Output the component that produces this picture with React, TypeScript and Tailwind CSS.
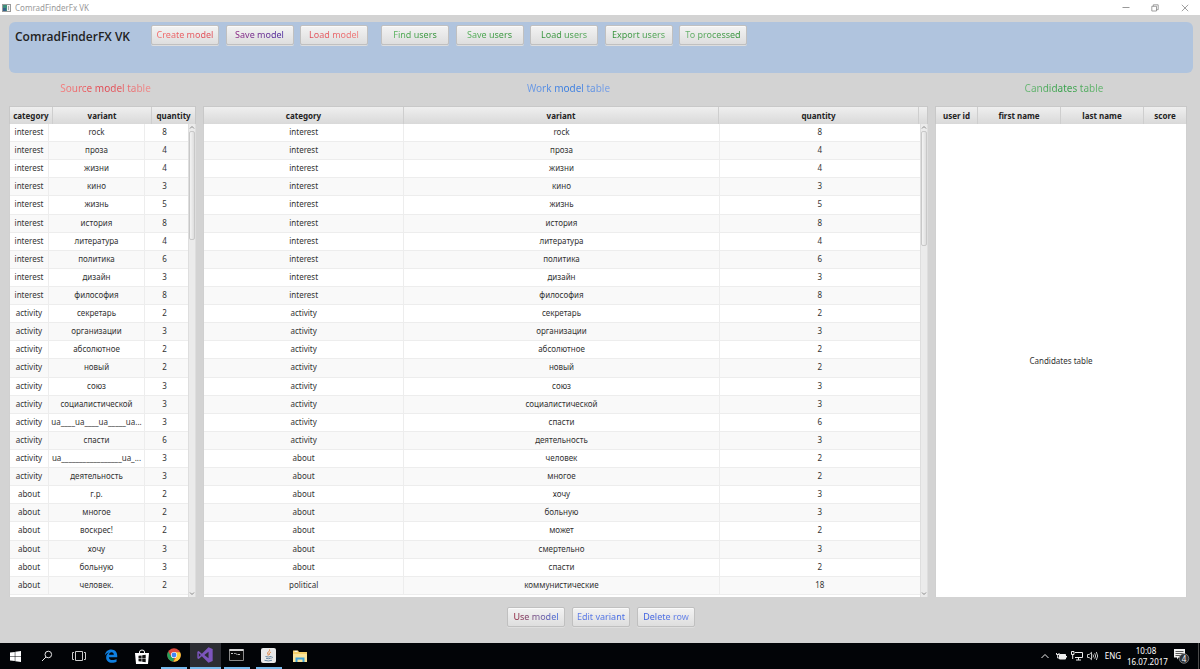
import { ReactNode } from "react";
import clsx from "clsx";

type Row = [string, string, number];

const sourceRows: Row[] = [
  ["interest", "rock", 8],
  ["interest", "проза", 4],
  ["interest", "жизни", 4],
  ["interest", "кино", 3],
  ["interest", "жизнь", 5],
  ["interest", "история", 8],
  ["interest", "литература", 4],
  ["interest", "политика", 6],
  ["interest", "дизайн", 3],
  ["interest", "философия", 8],
  ["activity", "секретарь", 2],
  ["activity", "организации", 3],
  ["activity", "абсолютное", 2],
  ["activity", "новый", 2],
  ["activity", "союз", 3],
  ["activity", "социалистической", 3],
  ["activity", "ua____ua____ua_____ua...", 3],
  ["activity", "спасти", 6],
  ["activity", "ua_________________ua_...", 3],
  ["activity", "деятельность", 3],
  ["about", "г.р.", 2],
  ["about", "многое", 2],
  ["about", "воскрес!", 2],
  ["about", "хочу", 3],
  ["about", "больную", 3],
  ["about", "человек.", 2],
];

const workRows: Row[] = [
  ...sourceRows.slice(0, 16),
  ["activity", "спасти", 6],
  ["activity", "деятельность", 3],
  ["about", "человек", 2],
  ["about", "многое", 2],
  ["about", "хочу", 3],
  ["about", "больную", 3],
  ["about", "может", 2],
  ["about", "смертельно", 3],
  ["about", "спасти", 2],
  ["political", "коммунистические", 18],
];

const modelButtons = [
  { label: "Create model", color: "from-[#f26a6a] to-[#e04a55]" },
  { label: "Save model", color: "from-[#8b2080] to-[#4a2a9e]" },
  { label: "Load model", color: "from-[#e04a55] to-[#f07a7a]" },
];

const userButtons = [
  { label: "Find users", color: "from-[#55b05a] to-[#2f9035]" },
  { label: "Save users", color: "from-[#55b05a] to-[#2f9035]" },
  { label: "Load users", color: "from-[#2f9035] to-[#55a85a]" },
  { label: "Export users", color: "from-[#2f9035] to-[#55a85a]" },
  { label: "To processed", color: "from-[#65b06a] to-[#2f9035]" },
];

const rowButtons = [
  { label: "Use model", color: "from-[#8e1030] to-[#3a68e0]" },
  { label: "Edit variant", color: "from-[#5a78e6] to-[#4068e6]" },
  { label: "Delete row", color: "from-[#3458e0] to-[#6a86ea]" },
];

function FxButton({
  label,
  color,
  width,
}: {
  label: string;
  color: string;
  width: string;
}) {
  return (
    <button
      className={clsx(
        "h-5 rounded-xs border border-[#c0c0c0] bg-linear-to-b from-[#f3f3f3] to-[#dedede] text-[9px] leading-[18px] whitespace-nowrap shadow-[inset_0_1px_0_#fafafa,0_1px_0_#dedede]",
        width
      )}
    >
      <span className={clsx("bg-linear-to-r bg-clip-text text-transparent", color)}>
        {label}
      </span>
    </button>
  );
}

function HeaderRow({ names, cols }: { names: string[]; cols: string }) {
  return (
    <thead className="block shrink-0">
      <tr
        className={clsx(
          "grid h-[18px] border border-b-0 border-[#c8c8c8] bg-linear-to-b from-[#efefef] to-[#d9d9d9]",
          cols
        )}
      >
        {names.map((name, i) => (
          <th
            key={i}
            className="overflow-hidden border-r border-[#cecece] text-center text-[8px] leading-[18px] font-bold whitespace-nowrap text-[#222] last:border-r-0"
          >
            {name}
          </th>
        ))}
      </tr>
    </thead>
  );
}

function ScrollBar({ thumb }: { thumb: string }) {
  return (
    <div className="absolute top-[18px] right-0 bottom-0 flex w-2 flex-col items-center border-x border-[#dedede] bg-[#ebebeb]">
      <svg className="h-[7px] w-1.5 shrink-0" viewBox="0 0 6 7" fill="none" stroke="#888">
        <path d="M1 4.5 3 2.5 5 4.5" />
      </svg>
      <div
        className={clsx(
          "w-1.5 shrink-0 rounded-xs border border-[#c8c8c8] bg-linear-to-r from-[#f4f4f4] to-[#dedede]",
          thumb
        )}
      />
      <svg className="mt-auto h-[7px] w-1.5 shrink-0" viewBox="0 0 6 7" fill="none" stroke="#888">
        <path d="M1 2.5 3 4.5 5 2.5" />
      </svg>
    </div>
  );
}

function ModelTable({
  title,
  names,
  rows,
  headCols,
  bodyCols,
  thumb,
}: {
  title: string;
  names: string[];
  rows: Row[];
  headCols: string;
  bodyCols: string;
  thumb: string;
}) {
  return (
    <div className="relative flex flex-1 flex-col bg-white">
      <table aria-label={title} className="flex flex-1 flex-col">
        <HeaderRow names={names} cols={headCols} />
        <tbody className="flex flex-1 flex-col border-l border-[#d0d0d0] pr-2 pb-[2px]">
          {rows.map((row, i) => (
            <tr
              key={i}
              className={clsx(
                "grid min-h-[18px] flex-1 items-stretch border-b border-[#ededed] even:bg-[#f9f9f9]",
                bodyCols
              )}
            >
              {row.map((cell, j) => (
                <td
                  key={j}
                  className="overflow-hidden border-r border-[#ededed] text-center text-[8px] leading-4 whitespace-nowrap text-[#333] last:border-r-0"
                >
                  {cell}
                </td>
              ))}
            </tr>
          ))}
        </tbody>
      </table>
      <ScrollBar thumb={thumb} />
    </div>
  );
}

function Panel({
  title,
  color,
  width,
  children,
}: {
  title: string;
  color: string;
  width: string;
  children: ReactNode;
}) {
  return (
    <section className={clsx("flex flex-col", width)}>
      <h2 className="h-[33px] pl-1.5 text-center text-[10px] leading-[30px]">
        <span className={clsx("bg-linear-to-r bg-clip-text text-transparent", color)}>
          {title}
        </span>
      </h2>
      {children}
    </section>
  );
}

function TitleBar() {
  return (
    <div className="flex h-[15px] shrink-0 items-center bg-white pl-0.5">
      <svg className="h-2 w-[9px]" viewBox="0 0 9 8">
        <rect x="0.5" y="0.5" width="8" height="7" fill="#f2f2f2" stroke="#9a9a9a" />
        <rect x="1" y="1" width="4" height="6" fill="#3d8f7c" />
        <rect x="1" y="4" width="3" height="3" fill="#35618c" />
        <rect x="6" y="2" width="1" height="4" fill="#aaa" />
      </svg>
      <span className="pl-1 text-[8px] leading-[14px] text-[#999]">ComradFinderFx VK</span>
      <div className="ml-auto flex">
        <button aria-label="Minimize" className="flex w-[29px] justify-center">
          <svg className="size-2" viewBox="0 0 8 8" stroke="#999">
            <path d="M0.5 3.5h7" />
          </svg>
        </button>
        <button aria-label="Restore" className="flex w-[29px] justify-center">
          <svg className="size-2" viewBox="0 0 8 8" fill="none" stroke="#888">
            <path d="M.8 2.300h4.700v4.700H.8zM2.300 2.300V.8h4.900v4.900H5.500" strokeWidth="0.8" />
          </svg>
        </button>
        <button aria-label="Close" className="flex w-[31px] justify-center">
          <svg className="size-2" viewBox="0 0 8 8" stroke="#888">
            <path d="M.8.8l6.400 6.400M7.200.8.8 7.200" strokeWidth="0.8" />
          </svg>
        </button>
      </div>
    </div>
  );
}

const apps: { name: string; open?: boolean; active?: boolean; icon: ReactNode }[] = [
  {
    name: "Start",
    icon: (
      <svg className="size-[11px]" viewBox="0 0 11 11" fill="#fff">
        <path d="M0 1.6 4.8.9v4.3H0zM5.3.8 11 0v5.2H5.3zM0 5.8h4.8v4.3L0 9.4zM5.3 5.8H11V11l-5.7-.8z" />
      </svg>
    ),
  },
  {
    name: "Search",
    icon: (
      <svg className="size-3" viewBox="0 0 12 12" fill="none" stroke="#e8e8e8">
        <circle cx="7.3" cy="4.5" r="3.3" />
        <path d="M5 7 1 11" />
      </svg>
    ),
  },
  {
    name: "Task view",
    icon: (
      <svg className="h-3 w-3.5" viewBox="0 0 14 12" fill="none" stroke="#ccc">
        <path d="M3.5 1.5h7v9h-7zM2 2.5H.5v7H2M12 2.5h1.5v7H12" />
      </svg>
    ),
  },
  {
    name: "Edge",
    icon: (
      <svg className="size-[14px]" viewBox="0 0 24 24" fill="#0f7fe0">
        <path d="M1.5 11C2.3 5 6.600 1 12.400 1 19 1 22.700 5.900 22.700 11.400V14H8.300c.2 3.400 3 5 6.500 5 2.700 0 4.900-.8 6.700-1.900v4.700C19.600 22.900 17 23.500 14 23.500 7.700 23.500 3.700 19.800 3.700 14.400c0-3.500 1.900-6.600 5.300-8.200C5.700 6.600 3.200 8.400 1.500 11zM8.500 9.800h8.400c0-2.700-1.500-4.200-4-4.200-2.300 0-4 1.700-4.400 4.200z" />
      </svg>
    ),
  },
  {
    name: "Store",
    icon: (
      <svg className="h-[15px] w-[14px]" viewBox="0 0 14 15">
        <path d="M4.500 4.500V3q0-2 2.500-2t2.500 2v1.500" fill="none" stroke="#fff" />
        <path d="M0 4h14l-1 11H1z" fill="#fff" />
        <path d="M3.500 6.800 6.600 6.400v2.800H3.500zM7.200 6.300l3.500-.5v3.400H7.200zM3.500 9.800h3.100v2.800l-3.100-.4zM7.200 9.800h3.500v3.400l-3.500-.5z" fill="#111" />
      </svg>
    ),
  },
  {
    name: "Chrome",
    open: true,
    icon: (
      <svg className="size-[14px]" viewBox="0 0 24 24">
        <circle cx="12" cy="12" r="11.500" fill="#dd4b3e" />
        <path d="M2 6.200 7.500 15 12 17l-1 6.500A11.500 11.500 0 0 1 2 6.200z" fill="#25a05a" />
        <path d="M22.500 7.200H12L16.700 14.500 11 23.500A11.500 11.500 0 0 0 22.500 7.200z" fill="#fbcd3a" />
        <circle cx="12" cy="12" r="5.300" fill="#fff" />
        <circle cx="12" cy="12" r="4.200" fill="#4285f4" />
      </svg>
    ),
  },
  {
    name: "Visual Studio",
    open: true,
    active: true,
    icon: (
      <svg className="size-4" viewBox="0 0 24 24">
        <path
          d="M17.200.5 23.500 3v18l-6.300 2.500L7.300 14 2.500 18 .5 17V7l2-1 4.800 4zM17.300 7 11 12l6.300 5zM2.700 9v6l3-3z"
          fill="#7d55bd"
          fillRule="evenodd"
        />
      </svg>
    ),
  },
  {
    name: "Command prompt",
    open: true,
    icon: (
      <svg className="h-3 w-[15px]" viewBox="0 0 15 12">
        <path d="M.5.500h14v11H.5z" fill="#0a0a0a" stroke="#8a8a8a" />
        <path d="M.5 1h14" stroke="#d5d5d5" strokeWidth="2" />
        <path d="M2 4.500h2M5 4.500h.8M6.500 4l1 1.500M8.500 5.500h2.500" stroke="#ddd" strokeWidth="0.9" />
      </svg>
    ),
  },
  {
    name: "Java",
    open: true,
    icon: (
      <svg className="size-[15px]" viewBox="0 0 15 15" fill="none">
        <rect width="15" height="15" rx="2" fill="#e9e9e9" />
        <path d="M8.500 1.500c.8 2-3 2.800-1.500 4.700.5.700.3 1 0 1.500M9.800 4.200C8 5 8 5.800 8.500 7" stroke="#e0803c" />
        <path d="M4.500 8.500q3 1 5.500 0M5 10.300q2.500.8 4.500 0M3.500 12.300q4 1.300 7.500 0M10.500 8.500q2 .3-.3 2" stroke="#5c7f9c" strokeWidth="0.9" />
      </svg>
    ),
  },
  {
    name: "Explorer",
    icon: (
      <svg className="h-3 w-[14px]" viewBox="0 0 14 12">
        <path d="M0 .5h5l1 1.500h8v10H0z" fill="#f5d06a" />
        <path d="M1.500 1.300h3" stroke="#fff" />
        <path d="M0 4h14v8H0z" fill="#fbe59b" />
        <path d="M2.500 12V7.500h9V12h-2V9.500h-5V12z" fill="#42a5dc" />
      </svg>
    ),
  },
];

function TaskBar() {
  return (
    <footer className="flex h-[26px] shrink-0 bg-[#020407] text-white">
      <nav className="grid w-[316px] grid-cols-10">
        {apps.map((app) => (
          <button
            key={app.name}
            aria-label={app.name}
            className={clsx("flex flex-col items-center", app.active && "bg-[#2c2d33]")}
          >
            <span className="flex flex-1 items-center">{app.icon}</span>
            {app.open && (
              <span
                className={clsx("h-0.5 bg-[#76b9ed]", app.active ? "w-full" : "w-[26px]")}
              />
            )}
          </button>
        ))}
      </nav>
      <div className="ml-auto flex items-center">
        <svg className="h-[9px] w-2" viewBox="0 0 8 9" fill="none" stroke="#eee">
          <path d="M.5 6 4 2.500 7.500 6" />
        </svg>
        <svg className="ml-[7px] h-[9px] w-[11px]" viewBox="0 0 11 9" fill="none" stroke="#eee">
          <path d="M3.500 2.500h6v4.500h-6z" fill="#eee" />
          <path d="M10.500 4v1.500M.5 1v1.500h2.500V1M1.700 2.500V6h2" />
        </svg>
        <svg className="ml-1 h-[10px] w-3" viewBox="0 0 12 10" fill="none" stroke="#eee">
          <path d="M4 1.500h7.500v5H4M7.500 6.500v2.500M5 9h5M.5.500h2.500v3H.5zM1.700 3.500V8" />
        </svg>
        <svg className="ml-1 h-[10px] w-3" viewBox="0 0 12 10" fill="none" stroke="#ddd" strokeWidth="0.9">
          <path d="M.5 3.500h1.700L4.500 1.300v7.400L2.200 6.500H.5zM6 3.500q1 1.500 0 3M7.700 2.300q1.900 2.700 0 5.400M9.300 1q2.800 4 0 8" />
        </svg>
        <span className="w-[28px] text-center text-[8px]">ENG</span>
        <time className="w-[38px] text-center text-[8px] leading-[11px] whitespace-nowrap">
          10:08
          <br />
          16.07.2017
        </time>
        <button aria-label="Notifications" className="ml-2 flex">
          <svg className="h-4 w-[17px]" viewBox="0 0 17 16">
            <path d="M1 1h11v8.500H5.500L4 11.500V9.500H1z" fill="#f2f2f2" />
            <path d="M2.500 3.500h8M2.500 5.500h8M2.500 7.500h5" stroke="#333" strokeWidth="0.8" />
            <circle cx="11" cy="10.500" r="4.800" fill="#2f3237" stroke="#999" strokeWidth="0.7" />
            <text x="11" y="13.500" textAnchor="middle" fontSize="8" fill="#fff">
              4
            </text>
          </svg>
        </button>
        <span className="mr-px ml-2 h-full w-px bg-[#4a4a4a]" />
      </div>
    </footer>
  );
}

export default function App() {
  return (
    <div className="flex min-h-screen flex-col bg-[#d3d3d3] font-['Noto_Sans','Open_Sans',sans-serif]">
      <TitleBar />
      <main className="flex flex-1 flex-col pt-[7px] pr-[7px] pl-[9px]">
        <header className="flex h-[51px] items-start rounded-md bg-[#b0c4de] pt-[3px] pl-1.5">
          <h1 className="w-[136px] font-['Open_Sans',sans-serif] text-[12px] leading-6 font-semibold whitespace-nowrap text-[#222]">
            ComradFinderFX VK
          </h1>
          <div className="flex w-[217px] justify-between">
            {modelButtons.map((b) => (
              <FxButton key={b.label} {...b} width="w-[68px]" />
            ))}
          </div>
          <div className="ml-[13px] flex w-[366px] justify-between">
            {userButtons.map((b) => (
              <FxButton key={b.label} {...b} width="w-[68px]" />
            ))}
          </div>
        </header>

        <div className="flex flex-1 gap-[7px] pr-1.5">
          <Panel
            title="Source model table"
            color="from-[#f47f7f] via-[#e0404c] to-[#f09090]"
            width="w-[187px]"
          >
            <ModelTable
              title="Source model"
              names={["category", "variant", "quantity"]}
              rows={sourceRows}
              headCols="grid-cols-[43fr_100fr_43fr]"
              bodyCols="grid-cols-[39fr_96fr_39fr_4fr]"
              thumb="h-[109px]"
            />
          </Panel>
          <Panel
            title="Work model table"
            color="from-[#6f9ce6] via-[#2f78e0] to-[#7fa4e6]"
            width="flex-1"
          >
            <ModelTable
              title="Work model"
              names={["category", "variant", "quantity", ""]}
              rows={workRows}
              headCols="grid-cols-[200fr_315fr_200fr_8px]"
              bodyCols="grid-cols-[200fr_315fr_200fr]"
              thumb="h-[115px]"
            />
          </Panel>
          <Panel
            title="Candidates table"
            color="from-[#6cb877] via-[#2f9f45] to-[#6cb877]"
            width="w-[252px]"
          >
            <table
              aria-label="Candidates"
              className="flex flex-1 flex-col bg-white"
            >
              <HeaderRow
                names={["user id", "first name", "last name", "score"]}
                cols="grid-cols-[42fr_83fr_83fr_42fr]"
              />
              <tbody className="flex flex-1 border-x border-[#d0d0d0]">
                <tr className="flex flex-1 items-center justify-center">
                  <td className="text-[8px] leading-4 text-[#333]">Candidates table</td>
                </tr>
              </tbody>
            </table>
          </Panel>
        </div>

        <div className="flex h-[46px] shrink-0 justify-center gap-[7px] pt-[10px]">
          {rowButtons.map((b) => (
            <FxButton key={b.label} {...b} width="w-[58px]" />
          ))}
        </div>
      </main>
      <TaskBar />
    </div>
  );
}
